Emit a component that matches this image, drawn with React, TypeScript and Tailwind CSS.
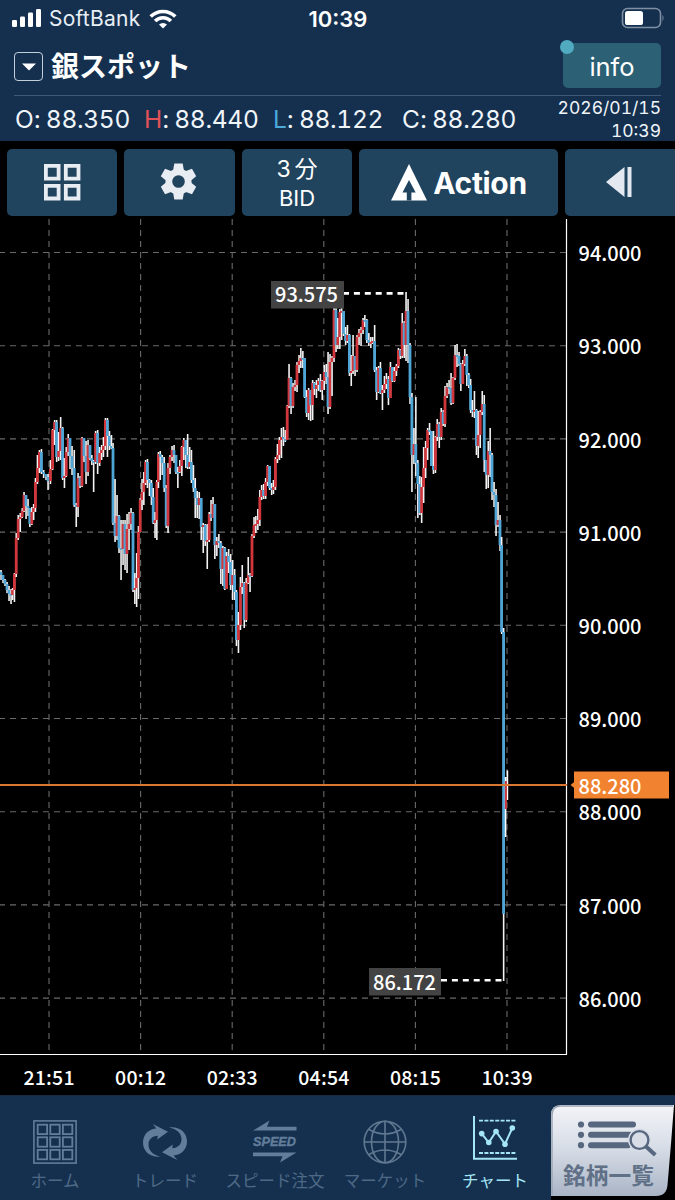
import React from "react";

type Candle = [x: number, close: number, high: number, low: number];

// Three minute candles in chart coordinates; each opens at the previous close.
const candles: Candle[] = [
  [-1, 572, 568, 576], [1, 575, 570, 580], [3, 580, 576, 583], [5, 584, 579, 586], [7, 590, 582, 593], [9, 594, 586, 601],
  [11, 595, 589, 604], [12.6, 590, 588, 600], [14.4, 574, 573, 602], [16.2, 538, 533, 577], [18.2, 519, 515, 540],
  [20.2, 517, 513, 532], [22.2, 511, 508, 518], [24, 495, 492, 512], [26, 506, 495, 519], [28, 508, 499, 516],
  [29.8, 524, 509, 527], [31.8, 512, 507, 525], [33.6, 508, 504, 520], [35.4, 482, 478, 512], [37.4, 468, 455, 484],
  [39.4, 452, 450, 473], [41.4, 472, 449, 474], [43.6, 474, 470, 478], [46, 477, 474, 480], [48, 481, 474, 490],
  [50.4, 469, 460, 484], [52.6, 430, 429, 470], [54.6, 422, 420, 445], [56.6, 457, 420, 462], [58.6, 451, 432, 461],
  [60.6, 428, 417, 460], [62.6, 478, 427, 480], [64.4, 476, 458, 488], [66.2, 452, 447, 477], [68.2, 438, 434, 456],
  [70, 456, 439, 469], [72, 468, 446, 475], [74.2, 505, 450, 507], [76.2, 507, 503, 527], [78, 478, 473, 517],
  [80, 486, 476, 488], [82, 438, 437, 487], [84, 456, 439, 462], [86, 472, 441, 484], [88, 445, 440, 476],
  [90, 458, 450, 460], [91.8, 461, 455, 465], [93.6, 462, 460, 492], [95.6, 433, 431, 464], [97.6, 463, 430, 474],
  [99.6, 453, 447, 466], [101.6, 450, 445, 460], [103.4, 446, 437, 457], [105.4, 420, 418, 450], [107.4, 436, 418, 457],
  [109.4, 446, 431, 450], [111.4, 448, 435, 449], [113, 523, 443, 525], [115, 536, 479, 542], [117, 516, 495, 540],
  [119, 548, 515, 553], [121, 549, 520, 580], [123, 524, 520, 565], [125, 554, 520, 570], [127, 529, 514, 573],
  [129, 524, 512, 550], [131, 513, 508, 530], [133, 590, 512, 592], [134.8, 588, 573, 604], [136.6, 578, 553, 607],
  [138.4, 532, 526, 599], [140.2, 500, 498, 532], [142, 492, 479, 510], [143.8, 483, 472, 505], [145.6, 462, 460, 485],
  [147.4, 480, 459, 488], [149.4, 483, 479, 496], [151.4, 497, 480, 505], [153.2, 523, 488, 524], [155, 520, 512, 538],
  [156.8, 482, 480, 540], [158.4, 454, 452, 488], [160.2, 457, 451, 480], [162.2, 463, 455, 475], [164.2, 488, 457, 492],
  [166.2, 526, 485, 528], [168, 468, 463, 533], [170, 457, 455, 474], [172, 450, 446, 461], [174, 455, 445, 463],
  [176, 472, 455, 474], [177.8, 472, 467, 488], [179.8, 466, 460, 473], [181.8, 447, 446, 476], [183.8, 440, 438, 460],
  [185.8, 455, 440, 468], [187.6, 467, 434, 469], [189.6, 462, 447, 469], [191.4, 480, 450, 483], [193.4, 488, 465, 492],
  [195.2, 498, 478, 518], [197.2, 505, 491, 518], [199.2, 498, 492, 519], [201.2, 527, 498, 540], [203.2, 525, 523, 553],
  [205.2, 541, 524, 546], [207.2, 540, 524, 569], [209.2, 514, 512, 542], [211, 518, 500, 521], [213, 504, 497, 518],
  [214.8, 545, 519, 559], [216.8, 541, 537, 556], [218.8, 543, 534, 548], [220.8, 569, 541, 584], [222.8, 548, 546, 586],
  [224.8, 589, 547, 590], [226.6, 556, 552, 588], [228.6, 562, 549, 573], [230.6, 585, 554, 590], [232.6, 575, 560, 600],
  [234.6, 592, 569, 600], [236.4, 640, 590, 646], [238.4, 625, 612, 653], [240.4, 587, 577, 630], [242.2, 583, 565, 594],
  [244.2, 620, 582, 628], [246.2, 583, 578, 622], [248.2, 575, 557, 584], [250, 576, 573, 592], [252, 536, 534, 577],
  [254, 525, 517, 538], [255.8, 524, 516, 533], [257.8, 520, 509, 530], [259.8, 497, 490, 526], [261.6, 490, 485, 500],
  [263.6, 496, 484, 499], [265.6, 482, 478, 499], [267.6, 466, 465, 486], [269.6, 488, 466, 490], [271.6, 490, 483, 495],
  [273.4, 487, 480, 494], [275.4, 459, 457, 490], [277.4, 455, 444, 463], [279.4, 440, 437, 460], [281.4, 437, 428, 458],
  [283.4, 439, 427, 446], [285.2, 440, 430, 442], [287.2, 406, 405, 440], [289, 378, 364, 408], [291, 406, 377, 414],
  [293, 387, 383, 408], [295, 385, 380, 391], [297, 365, 362, 392], [299, 361, 355, 373], [300.8, 358, 348, 368],
  [302.8, 358, 351, 368], [304.6, 397, 359, 398], [306.6, 413, 390, 417], [308.6, 390, 388, 420], [310.6, 405, 394, 421],
  [312.6, 383, 380, 420], [314.4, 389, 382, 395], [316.4, 385, 380, 398], [318.4, 381, 378, 391], [320.4, 390, 374, 392],
  [322.2, 381, 380, 400], [324.2, 372, 365, 390], [326.2, 377, 364, 384], [328, 407, 352, 414], [330, 362, 354, 409],
  [332, 358, 356, 396], [334, 310, 300, 362], [336, 345, 308, 352], [337.8, 337, 318, 349], [339.8, 312, 309, 349],
  [341.6, 311, 300, 340], [343.6, 334, 311, 336], [345.6, 341, 327, 345], [347.4, 335, 325, 343], [349.4, 373, 334, 376],
  [351.2, 371, 355, 386], [353, 356, 335, 374], [355, 370, 356, 376], [357, 337, 335, 372], [359, 333, 329, 345],
  [361, 330, 327, 346], [363, 320, 318, 334], [364.8, 320, 315, 327], [366.8, 340, 319, 343], [368.8, 343, 333, 346],
  [370.8, 342, 337, 348], [372.6, 341, 337, 344], [374.6, 370, 325, 372], [376.6, 392, 367, 400], [378.6, 368, 366, 393],
  [380.4, 393, 362, 394], [382.4, 390, 385, 410], [384.4, 384, 376, 393], [386.4, 379, 373, 389], [388.4, 398, 376, 405],
  [390.4, 367, 362, 398], [392.4, 381, 367, 382], [394.4, 371, 367, 382], [396.4, 366, 364, 376], [398.4, 350, 348, 368],
  [400.4, 356, 349, 359], [402.2, 323, 313, 358], [404.2, 345, 321, 358], [406, 311, 292, 361], [408, 345, 299, 363],
  [410, 397, 343, 404], [411.9, 455, 393, 492], [413.9, 444, 428, 464], [415.8, 463, 397, 476], [417.8, 484, 460, 518],
  [419.8, 513, 476, 515], [421.6, 487, 477, 523], [423.6, 468, 447, 503], [425.6, 448, 441, 478], [427.6, 430, 428, 460],
  [429.5, 431, 423, 435], [431.4, 466, 431, 463], [433.4, 470, 431, 474], [435.4, 437, 436, 473], [437.2, 424, 419, 441],
  [439.2, 437, 422, 448], [441.2, 412, 408, 440], [443.2, 424, 410, 426], [445, 396, 386, 427], [447, 387, 383, 398],
  [449, 388, 380, 394], [451, 403, 373, 405], [453, 378, 377, 404], [455, 355, 345, 380], [457, 356, 344, 367],
  [459, 364, 352, 366], [460.8, 384, 363, 391], [462.8, 364, 360, 384], [464.8, 356, 349, 366], [466.8, 375, 354, 386],
  [468.8, 385, 373, 388], [470.6, 410, 379, 413], [472.4, 411, 400, 417], [474.4, 410, 391, 418], [476.4, 446, 409, 455],
  [478.2, 435, 411, 458], [480.2, 412, 410, 448], [482.2, 404, 391, 415], [484.2, 460, 395, 472], [486.2, 475, 460, 489],
  [488.2, 451, 441, 488], [490.1, 455, 428, 477], [492, 492, 453, 500], [494, 495, 482, 507], [496, 525, 489, 536],
  [498, 520, 502, 527], [500, 545, 515, 551], [501.6, 632, 537, 634], [503.6, 914, 628, 981],
];

const prices = [94, 93, 92, 91, 90, 89, 88, 87, 86];
const times = ["21:51", "00:12", "02:33", "04:54", "08:15", "10:39"];
const priceY = (p: number) => 252.5 + (94 - p) * 93.2;
const timeX = (i: number) => 49 + i * 91.6;
const CHART_FONT = "'Noto Sans CJK JP', sans-serif";

function Chart() {
  return (
    <svg className="block h-[879px] w-[675px]" viewBox="0 216 675 879" fontFamily={CHART_FONT}>
      <g stroke="#6a6a6a" strokeWidth="1.1">
        {prices.map((p) => (
          <line key={p} x1="-1" x2="566" y1={priceY(p)} y2={priceY(p)} strokeDasharray="6 5" />
        ))}
        {times.map((t, i) => (
          <line key={t} y1="219" y2="1054" x1={timeX(i)} x2={timeX(i)} strokeDasharray="6 5" />
        ))}
      </g>
      <path d="M566.5 219V1054.5M0 1054.5H567" stroke="#fff" strokeWidth="1.2" fill="none" />
      {candles.map(([x, close, high, low], i) => {
        const open = i ? candles[i - 1][1] : 570;
        const top = Math.min(open, close);
        return (
          <g key={x}>
            <rect x={x - 0.75} y={high} width="1.6" height={low - high} fill="#f4f2f4" />
            <rect x={x - 1.4} y={top} width="2.8" height={Math.max(Math.abs(open - close), 1.8)} fill={close < open ? "#d0363b" : "#4fa6d6"} />
          </g>
        );
      })}
      <path d="M505.6 777V837M507.4 770.5V800" stroke="#fff" strokeWidth="1.6" />
      <path d="M505.9 781V809" stroke="#c9373d" strokeWidth="2" />
      <path d="M0 785H567" stroke="#d9762f" strokeWidth="1.8" />

      <path d="M343 293.4H408M441 980.3H503" stroke="#fff" strokeWidth="2.6" strokeDasharray="6 4.9" />
      <rect x="271" y="281" width="73" height="27.5" fill="#434343" />
      <rect x="369" y="968" width="72" height="27.5" fill="#434343" />
      <path d="M570.5 785L576 780.5V789.5Z" fill="#f08230" />
      <rect x="574" y="771.5" width="95" height="27" fill="#f08230" />

      <g fill="#fff" fontSize="20" fontWeight="500">
        <text x="275" y="302" textLength="63">93.575</text>
        <text x="373" y="989.5" textLength="63">86.172</text>
        {prices.map((p) => (
          <text key={p} x="578.5" y={priceY(p) + 8.7} textLength="63">{p.toFixed(3)}</text>
        ))}
        <text x="578.5" y="794" textLength="63">88.280</text>
        {times.map((t, i) => (
          <text key={t} x={timeX(i)} y="1084.5" textAnchor="middle" fontSize="19.5" textLength="51">{t}</text>
        ))}
      </g>
    </svg>
  );
}

function StatusBar() {
  return (
    <div className="flex h-9 items-center justify-between pt-[1px] pr-[10px] pl-[11px]">
      <div className="flex w-[280px] items-center">
        <svg className="h-5 w-8" viewBox="0 0 32 20" fill="#fff">
          <rect x="1" y="11" width="5" height="7" rx="1.3" />
          <rect x="9" y="7.5" width="5" height="10.5" rx="1.3" />
          <rect x="17" y="3.5" width="5" height="14.5" rx="1.3" />
          <rect x="25" y="0" width="5" height="18" rx="1.3" />
        </svg>
        <span className="ml-[6px] w-[92px] pt-[1px] text-[21px] whitespace-nowrap tracking-[0.25px] text-[#e8eef5]">SoftBank</span>
        <svg className="ml-[8px] h-5 w-7" viewBox="0 0 28 20" fill="none" stroke="#fff" strokeWidth="3.6">
          <path d="M1.7 7.5A17.5 17.5 0 0 1 26.3 7.5" />
          <path d="M6.1 12A11.2 11.2 0 0 1 21.9 12" />
          <path d="M10 15.6A5.8 5.8 0 0 1 18 15.6L14 19.6Z" fill="#fff" stroke="none" />
        </svg>
      </div>
      <span className="mr-[231px] w-[64px] pt-[1px] text-[22px] font-semibold whitespace-nowrap">10:39</span>
      <svg className="mt-[-2px] h-[22px] w-[44px] shrink-0" viewBox="0 0 44 22">
        <rect x="1.5" y="1.5" width="38" height="19" rx="5" fill="none" stroke="#7f90a4" strokeWidth="1.6" />
        <rect x="4" y="4" width="18" height="14" rx="2.6" fill="#fff" />
        <path d="M41.5 7.5q2 3.5 0 7z" fill="#7f90a4" />
      </svg>
    </div>
  );
}

function Quote({ label, value, color, width }: { label: string; value: string; color: string; width: string }) {
  return (
    <div className={`flex shrink-0 items-baseline whitespace-nowrap ${width}`}>
      <span className={color}>{label}</span>
      <span>:</span>
      <span className="ml-[5px] tracking-[-0.3px] tabular-nums">{value}</span>
    </div>
  );
}

function Header() {
  return (
    <header className="h-[141px] bg-[#15304f]">
      <StatusBar />
      <div className="mr-[14px] ml-[14px] flex h-[60px] items-start justify-between border-b-[1.5px] border-[#3f587a]">
        <div className="flex items-center pt-[14px]">
          <div className="mt-[2px] flex size-[29px] items-center justify-center rounded-[4px] border-[1.5px] border-[#c3cedb]">
            <svg className="h-[8px] w-[14px]" viewBox="0 0 14 8"><path d="M0 0.5H14L7 7.5Z" fill="#fff" /></svg>
          </div>
          <span className="-mt-[2px] ml-[8px] font-['Noto_Sans_CJK_JP',sans-serif] text-[28px] leading-[32px] font-bold">銀スポット</span>
        </div>
        <div className="relative mt-[7px] flex h-[45px] w-[98px] items-center justify-center rounded-[5px] bg-[#2b6075] pt-[3px]">
          <span className="text-[25.5px]">info</span>
          <span className="absolute -top-[3px] -left-[3px] size-[14px] rounded-full bg-[#50abc0]" />
        </div>
      </div>
      <div className="flex h-[45px] items-center pr-[14px] pl-[15px] text-[24.5px] text-[#f0f5fa]">
        <div className="flex pt-[2px]">
          <Quote label="O" value="88.350" color="text-[#f0f5fa]" width="w-[129px]" />
          <Quote label="H" value="88.440" color="text-[#e05258]" width="w-[129px]" />
          <Quote label="L" value="88.122" color="text-[#4caadb]" width="w-[129px]" />
          <Quote label="C" value="88.280" color="text-[#f0f5fa]" width="w-[125px]" />
        </div>
        <div className="flex flex-1 flex-col items-end pt-[2px] text-[17.5px] leading-[22.5px] tabular-nums">
          <span>2026/01/15</span>
          <span>10:39</span>
        </div>
      </div>
    </header>
  );
}

function Toolbar() {
  const button = "flex h-[67px] shrink-0 items-center justify-center rounded-[5px] bg-[#20435e]";
  return (
    <div className="flex h-[75px] gap-[7px] overflow-hidden bg-black pt-[8px] pl-[7px]">
      <div className={`${button} w-[110px]`}>
        <svg className="h-[37px] w-[37px]" viewBox="0 0 37 37" fill="none" stroke="#e8ecf3" strokeWidth="3.8">
          <path d="M1.9 1.9H14.6V14.6H1.9ZM21.8 1.9H34.5V14.6H21.8ZM1.9 21.8H14.6V34.5H1.9ZM21.8 21.8H34.5V34.5H21.8Z" />
        </svg>
      </div>
      <div className={`${button} w-[111px] pr-[2px] pb-[2px]`}>
        <svg className="size-[37px]" viewBox="-18.5 -18.5 37 37" fill="#e8ecf3">
          {[0, 60, 120].map((a) => (
            <path key={a} d="M-4.2 -18H4.2L5.4 -11V11L4.2 18H-4.2L-5.4 11V-11Z" transform={`rotate(${a})`} />
          ))}
          <circle r="13" />
          <circle r="6.3" fill="#20435e" />
        </svg>
      </div>
      <div className={`${button} w-[110px] flex-col text-[22px] leading-[29px]`}>
        <span className="font-['Inter','Noto_Sans_CJK_JP',sans-serif] text-[23px]">3<span className="ml-[4px] font-['Noto_Sans_CJK_JP',sans-serif]">分</span></span>
        <span>BID</span>
      </div>
      <div className={`${button} w-[199px] pl-[1px]`}>
        <svg className="h-[37px] w-[36px]" viewBox="0 0 36 37">
          <path d="M18 0L36 36.5H0Z" fill="#fff" />
          <path d="M18 16L24.7 28.5H20.4V36.5H15.8V28.5H11.5Z" fill="#20435e" />
        </svg>
        <span className="ml-[6px] pt-[1px] text-[30px] font-bold tracking-[-0.35px]">Action</span>
      </div>
      <div className={`${button} w-[118px] pr-[11px] pb-[2px]`}>
        <svg className="h-[30px] w-[26px]" viewBox="0 0 26 30" fill="#e4e9f1"><path d="M0 15L18.5 0V30ZM21.5 0H25.5V30H21.5Z" /></svg>
      </div>
    </div>
  );
}

function HomeIcon() {
  return (
    <svg className="size-[44px]" viewBox="0 0 44 44" fill="none" stroke="#617d9a">
      <rect x="0.9" y="0.9" width="42.2" height="42.2" strokeWidth="1.6" />
      {[0, 1, 2].map((r) => [0, 1, 2].map((c) => (
        <rect key={`${r}${c}`} x={4.7 + c * 12.6} y={4.7 + r * 12.6} width="9.4" height="9.4" strokeWidth="1.8" />
      )))}
    </svg>
  );
}

function TradeIcon() {
  const arrow = "M17.7 36.6C6 37.5 0 30.5 0 22.5C0 14.5 6 8.8 13.4 8.6L9.7 4L25 11.8L14.2 19.6L14.8 15.8C9 16 5.3 19.5 5.5 25.2C5.8 31 10.5 35.2 17.7 36.6Z";
  return (
    <svg className="size-[44px]" viewBox="0 0 44 44" fill="#617d9a">
      <path d={arrow} />
      <path d={arrow} transform="rotate(180 22 22)" />
    </svg>
  );
}

function SpeedIcon() {
  return (
    <svg className="size-[44px]" viewBox="0 0 44 44" fill="#617d9a">
      <path d="M0 10.5L16.5 0.5L14 6.7H43.5V10.5ZM43.5 32.5L27 42.5L29.5 36.3H0V32.5Z" />
      <text x="0" y="26" textLength="43" lengthAdjust="spacingAndGlyphs" fontFamily="'Liberation Sans', sans-serif" fontSize="12.3" fontWeight="bold" fontStyle="italic" stroke="#617d9a" strokeWidth="0.4">SPEED</text>
    </svg>
  );
}

function MarketIcon() {
  return (
    <svg className="size-[44px]" viewBox="0 0 44 44" fill="none" stroke="#617891" strokeWidth="1.6">
      <circle cx="22" cy="22" r="20.8" />
      <ellipse cx="22" cy="22" rx="13.5" ry="20.8" />
      <path d="M22 1V43M1.2 22H42.8M6 9.5Q22 18.5 38 9.5M6 34.5Q22 25.5 38 34.5" />
    </svg>
  );
}

function ChartIcon() {
  return (
    <svg className="size-[44px]" viewBox="0 0 44 44" fill="none" stroke="#a4e6f5">
      <path d="M1 0V42.7H44" strokeWidth="2" />
      <path d="M6 4.7H42.5M6 37H42.5" strokeWidth="1.8" strokeDasharray="4 1.4" />
      <path d="M8.7 17.6L15.8 26.5L23 15.5L32 28L39.3 12" strokeWidth="2" />
      <g fill="#a4e6f5" stroke="none">
        <circle cx="8.7" cy="17.6" r="2.8" /><circle cx="15.8" cy="26.5" r="2.8" /><circle cx="23" cy="15.5" r="2.8" />
        <circle cx="32" cy="28.2" r="2.8" /><circle cx="39.3" cy="12" r="2.8" />
      </g>
    </svg>
  );
}

const tabs = [
  { label: "ホーム", icon: <HomeIcon />, style: "pt-[24px] text-[#4d6985]" },
  { label: "トレード", icon: <TradeIcon />, style: "pt-[24px] text-[#4d6985]" },
  { label: "スピード注文", icon: <SpeedIcon />, style: "pt-[24px] text-[#4d6985]" },
  { label: "マーケット", icon: <MarketIcon />, style: "pt-[24px] text-[#4d6985]" },
  { label: "チャート", icon: <ChartIcon />, style: "pt-[20px] text-[#a4e6f5]" },
];

function TabBar() {
  return (
    <nav className="flex h-[105px] border-t border-[#1c2b3c] bg-black">
      <div className="flex w-[551px] shrink-0 bg-[#15304f]">
        {tabs.map(({ label, icon, style }) => (
          <div key={label} className={`flex w-[110px] shrink-0 flex-col items-center justify-between pb-[8px] ${style}`}>
            {icon}
            <span className="font-['Noto_Sans_CJK_JP',sans-serif] text-[16.5px] leading-[24px] whitespace-nowrap">{label}</span>
          </div>
        ))}
      </div>
      <svg className="h-[104px] w-[124px]" viewBox="551 1096 124 104">
        <defs>
          <linearGradient id="card" x1="0" y1="0" x2="0" y2="1">
            <stop offset="0" stopColor="#f3f4f8" />
            <stop offset="0.5" stopColor="#d5dbe5" />
            <stop offset="1" stopColor="#a9b4c6" />
          </linearGradient>
        </defs>
        <path d="M551 1096H675V1105H557L551 1112Z" fill="#15304f" />
        <path d="M551 1196V1115Q551 1105 561 1105H674Q671 1145 667.5 1185Q666.5 1196 656 1196Z" fill="url(#card)" />
        <path d="M552 1195V1115Q552 1106 561 1106H673" fill="none" stroke="#9ba5b4" strokeWidth="1.5" />
        <g fill="#56677f">
          <circle cx="581" cy="1124.5" r="3.1" /><circle cx="581" cy="1134.8" r="3.1" /><circle cx="581" cy="1145.2" r="3.1" />
          <rect x="588" y="1121.4" width="48" height="6" rx="3" />
          <rect x="588" y="1131.8" width="45" height="6" rx="3" />
          <rect x="588" y="1142.2" width="43" height="6" rx="3" />
        </g>
        <circle cx="639.5" cy="1140" r="11.5" fill="#d8dde7" />
        <circle cx="639.5" cy="1140" r="8.9" fill="#d8dde7" stroke="#56677f" strokeWidth="2.4" />
        <path d="M646 1146.5L655.3 1155" stroke="#56677f" strokeWidth="4" />
        <text x="563" y="1183.5" textLength="91" fontFamily={CHART_FONT} fontSize="22.7" fontWeight="700" fill="#607086">銘柄一覧</text>
      </svg>
    </nav>
  );
}

export default function App() {
  return (
    <div className="flex h-[1200px] w-[675px] flex-col overflow-hidden bg-black font-['Inter',sans-serif] text-white">
      <Header />
      <Toolbar />
      <Chart />
      <TabBar />
    </div>
  );
}
